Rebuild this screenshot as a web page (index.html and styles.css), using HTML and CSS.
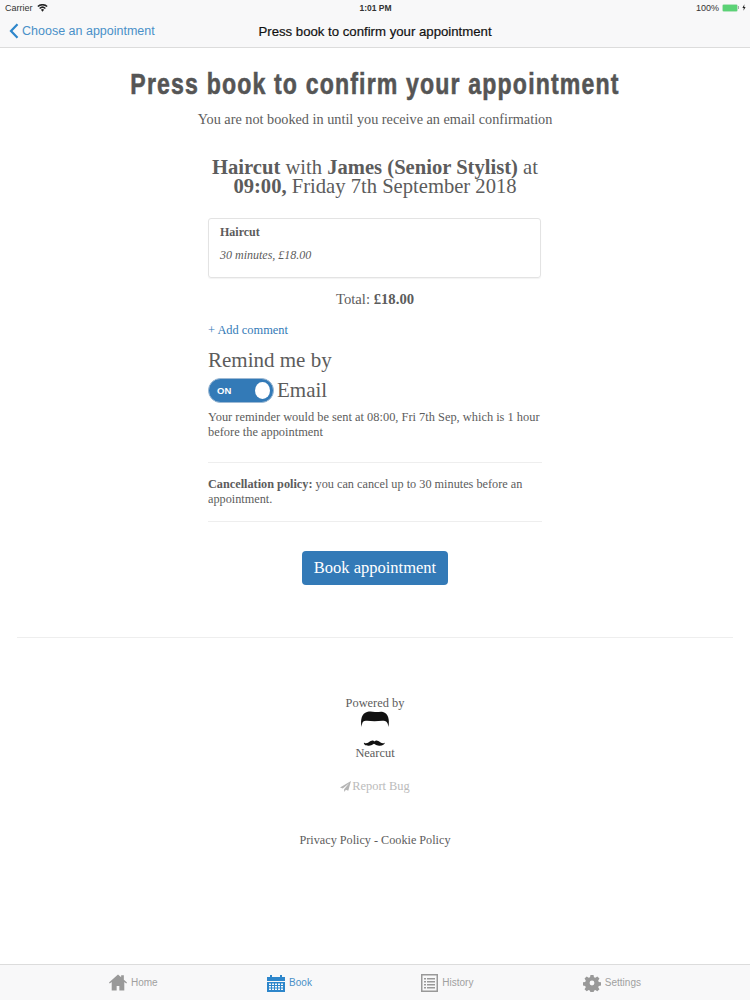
FILE: index.html
```html
<!DOCTYPE html>
<html lang="en">
<head>
  <meta charset="UTF-8">
  <title>Press book to confirm your appointment</title>
  <link rel="stylesheet" href="styles.css">
</head>
<body>
  <div class="statusbar">
    <div class="status-left">
      <span>Carrier</span>
      <svg class="wifi" viewBox="0 0 12 9" width="11" height="8"><path d="M6 8.600 4.200 6.600a2.600 2.600 0 0 1 3.600 0zM3.300 5.600 2.200 4.400a5.600 5.600 0 0 1 7.600 0L8.700 5.600a4 4 0 0 0-5.400 0zM1.300 3.400.2 2.200a8.600 8.600 0 0 1 11.600 0l-1.100 1.200a7 7 0 0 0-9.400 0z" fill="#222"/></svg>
    </div>
    <div class="status-time">1:01 PM</div>
    <div class="status-right">
      <span>100%</span>
      <span class="battery"><span class="battery-level"></span></span>
      <span class="battery-tip"></span>
      <svg viewBox="0 0 5 8" width="4" height="7"><path d="M3 0 .5 4.500h1.700L1.800 8l2.700-4.700H2.700z" fill="#222"/></svg>
    </div>
  </div>
  <nav class="navbar">
    <a class="nav-back" href="#">
      <svg viewBox="0 0 10 16" width="10" height="16"><path d="M8.500 1.200 2 8l6.500 6.800" fill="none" stroke="#2d86cb" stroke-width="2.200"/></svg>
      Choose an appointment
    </a>
    <div class="nav-title">Press book to confirm your appointment</div>
  </nav>

  <main class="content">
    <h1>Press book to confirm your appointment</h1>
    <p class="lead">You are not booked in until you receive an email confirmation</p>
    <h2><b>Haircut</b> with <b>James (Senior Stylist)</b> at<br><b>09:00,</b> Friday 7th September 2018</h2>

    <div class="column">
      <div class="service-card">
        <div class="service-name">Haircut</div>
        <div class="service-meta">30 minutes, £18.00</div>
      </div>
      <p class="total">Total: <b>£18.00</b></p>
      <a class="add-comment" href="#">+ Add comment</a>

      <h3>Remind me by</h3>
      <div class="remind-row">
        <span class="toggle"><span class="toggle-label">ON</span><span class="toggle-knob"></span></span>
        <span class="remind-method">Email</span>
      </div>
      <p class="small-text reminder">Your reminder would be sent at 08:00, Fri 7th Sep, which is 1 hour before the appointment</p>

      <p class="small-text policy"><b>Cancellation policy:</b> you can cancel up to 30 minutes before an appointment.</p>

      <div class="book-row"><a class="book-btn" href="#">Book appointment</a></div>
    </div>

    <footer class="site-footer">
      <div class="powered">Powered by</div>
      <svg class="logo" viewBox="0 0 30 38" width="30" height="38">
        <path d="M1.500 17C.2 9 2 3.500 7 2c3-.8 5-.5 8 0s5-.8 8 0c5 1.500 6.800 7 5.500 15-.6-3-1.200-5.500-3.500-6-3-.7-7 .2-10.500.2S7.500 10.300 4.500 11C2.200 11.500 2.100 14 1.500 17z" fill="#111"/>
        <path d="M4 32.500c1.200 1.300 3.200 1 4.800-.2 1.800-1.300 3.600-2.300 5-1.300.5.300.9.300 1.400 0 1.400-1 3.200 0 5 1.300 1.600 1.200 3.600 1.500 4.800.2-.2 2.300-3.500 3.700-7 3-1.800-.4-2.900-1-4-1.800-1.100.8-2.200 1.400-4 1.800-3.500.7-6.800-.7-6-3z" fill="#111"/>
      </svg>
      <div class="brand">Nearcut</div>
      <a class="report-bug" href="#">
        <svg viewBox="0 0 12 12" width="11" height="11"><path d="M12 0 0 7l3 1.300L10 2.500 4.500 9v3l2-2.400 2.500 1.100z" fill="#b5b5b5"/></svg>Report Bug
      </a>
      <div class="legal"><a href="#">Privacy Policy</a> - <a href="#">Cookie Policy</a></div>
    </footer>
  </main>

  <div class="tabbar">
    <a class="tab" href="#">
      <svg viewBox="0 0 20 18" width="18" height="17"><path d="M10 0 0 9l.8 1.200L3 8.400V18h5.500v-5h3v5H17V8.400l2.200 1.800L20 9l-3.500-3.100V1h-3v2.200z" fill="#999"/></svg>
      Home
    </a>
    <a class="tab tab-active" href="#">
      <svg viewBox="0 0 18 18" width="18" height="18"><path d="M0 3h3V1h2v2h8V1h2v2h3v4H0z" fill="#2d86cb"/><path d="M0 8h18v10H0zM2 9.500v1.500h2V9.500zm3 0v1.500h2V9.500zm3 0v1.500h2V9.500zm3 0v1.500h2V9.500zm3 0v1.500h2V9.500zM2 12v1.500h2V12zm3 0v1.500h2V12zm3 0v1.500h2V12zm3 0v1.500h2V12zm3 0v1.500h2V12zM2 14.500V16h2v-1.500zm3 0V16h2v-1.500zm3 0V16h2v-1.500zm3 0V16h2v-1.500zm3 0V16h2v-1.500z" fill="#2d86cb" fill-rule="evenodd"/></svg>
      Book
    </a>
    <a class="tab" href="#">
      <svg viewBox="0 0 17 18" width="17" height="18"><path d="M0 0h17v18H0zM1.500 1.500v15h14v-15zM3 4h2v1.500H3zm3 0h8v1.500H6zM3 7h2v1.500H3zm3 0h8v1.500H6zM3 10h2v1.500H3zm3 0h8v1.500H6zM3 13h2v1.500H3zm3 0h8v1.500H6z" fill="#999" fill-rule="evenodd"/></svg>
      History
    </a>
    <a class="tab" href="#">
      <svg viewBox="0 0 18 18" width="18" height="18"><path d="M7.300 0h3.400l.5 2.500 1.500.6 2.200-1.400 2.400 2.400-1.400 2.200.6 1.500 2.500.5v3.400l-2.500.5-.6 1.500 1.400 2.200-2.400 2.400-2.200-1.400-1.500.6-.5 2.500H7.300l-.5-2.500-1.500-.6-2.200 1.400-2.400-2.400 1.400-2.200-.6-1.500L-1 11.700V8.300l2.500-.5.6-1.500L.7 4.100l2.400-2.400 2.200 1.400 1.500-.6zM9 6.300a2.700 2.700 0 1 0 0 5.400 2.700 2.700 0 0 0 0-5.400z" transform="translate(0.900 0.900) scale(0.900)" fill="#999" fill-rule="evenodd"/></svg>
      Settings
    </a>
  </div>
</body>
</html>
```

FILE: styles.css
```css
* {
  margin: 0;
  padding: 0;
  box-sizing: border-box;
}
html, body {
  height: 1000px;
}
body {
  display: flex;
  flex-direction: column;
  background-color: #fff;
  color: #5c5c5c;
  font-family: "Liberation Serif", serif;
  overflow: hidden;
}
a {
  text-decoration: none;
}

/* ios chrome */
.statusbar {
  height: 15px;
  background-color: #f8f8f9;
  display: grid;
  grid-template-columns: 1fr auto 1fr;
  align-items: center;
  padding: 0 4px 0 5px;
  font-family: "Liberation Sans", sans-serif;
  font-size: 9px;
  color: #333;
}
.status-left {
  display: flex;
  align-items: center;
  gap: 4px;
}
.status-time {
  font-weight: bold;
  font-size: 8.500px;
}
.status-right {
  display: flex;
  justify-content: flex-end;
  align-items: center;
  gap: 3px;
}
.battery {
  width: 16px;
  height: 8px;
  border: 1px solid #b5e4c0;
  border-radius: 2px;
  display: block;
}
.battery-level {
  display: block;
  height: 100%;
  background-color: #5bd276;
}
.battery-tip {
  width: 1px;
  height: 3px;
  margin-left: -3px;
  background-color: #aaa;
}
.navbar {
  height: 33px;
  background-color: #f8f8f9;
  border-bottom: 1px solid #dcdcdc;
  display: flex;
  align-items: center;
  justify-content: center;
  position: relative;
  font-family: "Liberation Sans", sans-serif;
  font-size: 12.500px;
}
.nav-back {
  position: absolute;
  left: 9px;
  top: 8px;
  display: flex;
  align-items: center;
  gap: 3px;
  color: #4a90c8;
}
.nav-title {
  color: #111;
  font-size: 13.200px;
  -webkit-text-stroke: 0.2px #111;
}

/* page */
.content {
  flex: 1;
  text-align: center;
}
h1 {
  margin-top: 16px;
  font-family: "Liberation Sans", sans-serif;
  font-size: 30px;
  line-height: 40px;
  letter-spacing: 1.500px;
  font-weight: bold;
  color: #555;
  white-space: nowrap;
  transform: scaleX(0.77);
  -webkit-text-stroke: 0.6px #555;
}
.lead {
  margin-top: 5px;
  font-size: 14.250px;
  line-height: 20px;
}
h2 {
  margin-top: 29px;
  font-size: 20.600px;
  line-height: 19px;
  font-weight: normal;
}
.column {
  width: 334px;
  margin: 22px auto 0;
  text-align: left;
}
.service-card {
  width: 333px;
  height: 60px;
  border: 1px solid #e3e3e3;
  border-radius: 3px;
  padding: 5px 11px;
  box-shadow: 0 1px 1px rgba(0, 0, 0, 0.05);
}
.service-name {
  font-size: 12px;
  line-height: 16px;
  font-weight: bold;
}
.service-meta {
  margin-top: 7px;
  font-size: 12px;
  line-height: 16px;
  font-style: italic;
}
.total {
  margin-top: 11px;
  font-size: 14.700px;
  line-height: 20px;
  text-align: center;
}
.add-comment {
  display: block;
  margin-top: 12px;
  font-size: 12.400px;
  line-height: 18px;
  color: #337ab7;
}
h3 {
  margin-top: 8px;
  font-size: 21px;
  line-height: 26px;
  font-weight: normal;
}
.remind-row {
  display: flex;
  align-items: center;
  margin-top: 5px;
  gap: 3px;
}
.toggle {
  width: 66px;
  height: 25px;
  border: 1px solid #9db9d4;
  border-radius: 13px;
  background-color: #337ab7;
  display: flex;
  align-items: center;
  justify-content: space-between;
  padding: 0 2px 0 8px;
}
.toggle-label {
  font-family: "Liberation Sans", sans-serif;
  font-size: 9.500px;
  font-weight: bold;
  color: #fff;
}
.toggle-knob {
  width: 15px;
  height: 17px;
  border-radius: 50%;
  background-color: #fff;
  margin-right: 1px;
}
.remind-method {
  font-size: 21px;
}
.small-text {
  font-size: 12.400px;
  line-height: 15px;
}
.reminder {
  margin-top: 7px;
  padding-bottom: 22px;
  border-bottom: 1px solid #eee;
}
.policy {
  font-size: 12.250px;
  padding: 14px 0 14px;
  border-bottom: 1px solid #eee;
}
.book-row {
  margin-top: 29px;
  display: flex;
  justify-content: center;
}
.book-btn {
  width: 146px;
  height: 34px;
  background-color: #337ab7;
  border-radius: 4px;
  color: #fff;
  font-size: 16.500px;
  line-height: 33px;
  text-align: center;
}

/* footer */
.site-footer {
  margin: 52px 17px 0;
  padding-top: 58px;
  border-top: 1px solid #eee;
  font-size: 12.400px;
  line-height: 14px;
}
.logo {
  display: block;
  margin: 0 auto;
}
.brand {
  margin-top: -2px;
}
.report-bug {
  display: inline-flex;
  align-items: center;
  gap: 1px;
  margin-top: 19px;
  color: #bbb;
}
.legal {
  margin-top: 38px;
  font-size: 12.200px;
}
.legal a {
  color: #5c5c5c;
}

/* tabs */
.tabbar {
  height: 36px;
  background-color: #f8f8f9;
  border-top: 1px solid #dcdcdc;
  display: flex;
  justify-content: space-between;
  padding: 0 109px;
  font-family: "Liberation Sans", sans-serif;
  font-size: 10px;
}
.tab {
  display: flex;
  align-items: center;
  gap: 4px;
  color: #a0a0a0;
}
.tab-active {
  color: #4a90c8;
}
```
